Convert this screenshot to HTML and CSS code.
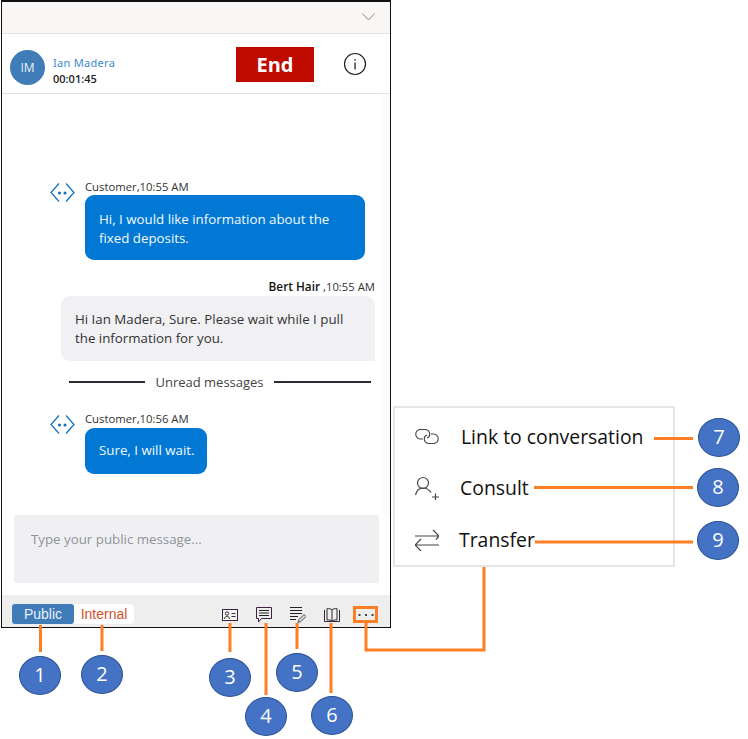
FILE: index.html
```html
<!DOCTYPE html>
<html lang="en">
<head>
<meta charset="utf-8">
<title>Conversation</title>
<link rel="stylesheet" href="styles.css">
</head>
<body>
<main class="canvas">
  <section class="panel">
    <div class="strip">
      <svg class="chev" width="13" height="8" viewBox="0 0 13 8"><path d="M.5.5 6.500 7 12.500.5" fill="none" stroke="#8a8a8a" stroke-width="1"/></svg>
    </div>
    <header class="head">
      <div class="avatar">IM</div>
      <div class="who">
        <div class="name">Ian Madera</div>
        <div class="time">00:01:45</div>
      </div>
      <button class="end">End</button>
      <svg class="info" width="24" height="24" viewBox="0 0 24 24"><circle cx="12" cy="12" r="10.5" fill="none" stroke="#222" stroke-width="1.2"/><rect x="11.4" y="10.5" width="1.3" height="7" fill="#222"/><rect x="11.4" y="7" width="1.3" height="1.6" fill="#222"/></svg>
    </header>
    <div class="messages">
      <div class="msg in first">
        <svg class="bot" width="25" height="19" viewBox="0 0 25 19"><path d="M9 .5 1 9.500l8 9M16 .5l8 9-8 9" fill="none" stroke="#0a6fc2" stroke-width="1.200"/><circle cx="9.500" cy="10" r="1.500" fill="#0a6fc2"/><circle cx="15" cy="10" r="1.500" fill="#0a6fc2"/></svg>
        <div class="stack">
          <div class="meta">Customer,10:55 AM</div>
          <div class="bubble blue wide">Hi, I would like information about the fixed deposits.</div>
        </div>
      </div>
      <div class="msg out">
        <div class="meta right"><span class="agent">Bert Hair</span> ,10:55 AM</div>
        <div class="bubble grey">Hi Ian Madera, Sure. Please wait while I pull the information for you.</div>
      </div>
      <div class="unread"><span class="rule rule-l"></span><span class="unread-text">Unread messages</span><span class="rule rule-r"></span></div>
      <div class="msg in">
        <svg class="bot" width="25" height="19" viewBox="0 0 25 19"><path d="M9 .5 1 9.500l8 9M16 .5l8 9-8 9" fill="none" stroke="#0a6fc2" stroke-width="1.200"/><circle cx="9.500" cy="10" r="1.500" fill="#0a6fc2"/><circle cx="15" cy="10" r="1.500" fill="#0a6fc2"/></svg>
        <div class="stack">
          <div class="meta">Customer,10:56 AM</div>
          <div class="bubble blue short">Sure, I will wait.</div>
        </div>
      </div>
    </div>
    <div class="composer">Type your public message...</div>
    <footer class="tools">
      <div class="tabs"><span class="tab on">Public</span><span class="tab off">Internal</span></div>
      <div class="icons">
        <svg width="16" height="16" viewBox="0 0 16 16"><rect x=".5" y="2.500" width="15" height="11" fill="#f6f4f6" stroke="#3a2340"/><circle cx="5" cy="6.500" r="1.700" fill="none" stroke="#333"/><path d="M2.500 12c0-3.500 5-3.500 5 0M9.500 6.500h4M9.500 9.500h4" fill="none" stroke="#333"/></svg>
        <svg width="16" height="16" viewBox="0 0 16 16"><path d="M.5.5h15v11H5.500L2.500 15v-3.500h-2z" fill="none" stroke="#3a2340"/><path d="M3 3.500h10M3 6h10M3 8.500h10" stroke="#222"/></svg>
        <svg width="16" height="16" viewBox="0 0 16 16"><path d="M0 .5h12M0 3.500h12M0 6.500h12M0 9.500h8M0 12.500h6" stroke="#222"/><path d="M8 15.500l1-3 5-5 2 2-5 5z" fill="#cfd6dc" stroke="#555"/></svg>
        <svg width="16" height="16" viewBox="0 0 16 16"><path d="M.5 3v11.500h15V3" fill="none" stroke="#3a2340"/><path d="M3 13V1.700c2.200-.2 4 0 5 1.300 1-1.300 2.800-1.500 5-1.300V13c-2.200-.2-4 0-5 1.300C7 13 5.200 12.800 3 13zM8 3v11" fill="none" stroke="#2d2d33"/></svg>
        <svg width="16" height="16" viewBox="0 0 16 16"><rect x=".5" y="7" width="2" height="2" fill="#444"/><rect x="7" y="7" width="2" height="2" fill="#444"/><rect x="13.500" y="7" width="2" height="2" fill="#444"/></svg>
      </div>
    </footer>
  </section>

  <section class="menu">
    <div class="item link">
      <svg class="mi" width="24" height="15" viewBox="0 0 24 15"><path d="M8 10H5.500a4.750 4.750 0 0 1 0-9.500H10a4.750 4.750 0 0 1 4.750 4.750A4 4 0 0 1 12 9" fill="none" stroke="#444" stroke-width="1.100"/><path d="M16 5h2.500a4.750 4.750 0 0 1 0 9.500H14a4.750 4.750 0 0 1-4.750-4.750A4 4 0 0 1 12 6" fill="none" stroke="#444" stroke-width="1.100"/></svg>
      <span>Link to conversation</span>
    </div>
    <div class="item consult">
      <svg class="mi" width="24" height="24" viewBox="0 0 24 24"><circle cx="8" cy="7" r="5.500" fill="none" stroke="#444" stroke-width="1.200"/><path d="M.6 19c1-5 4-7 7.400-7s6 1.500 8 4.500" fill="none" stroke="#444" stroke-width="1.200"/><path d="M20.500 17.500v7M17 21h7" stroke="#444" stroke-width="1.200"/></svg>
      <span>Consult</span>
    </div>
    <div class="item transfer">
      <svg class="mi" width="24" height="22" viewBox="0 0 24 22"><path d="M0 7h23.500M18 1l6 6-3 3.500M24 16H.5M6 10l-6 6 6 6" fill="none" stroke="#444" stroke-width="1.200"/></svg>
      <span>Transfer</span>
    </div>
  </section>

  <svg class="wires" width="748" height="739" viewBox="0 0 748 739">
    <g fill="none" stroke="#fd7e23" stroke-width="3">
      <path d="M40.500 625v27M102 625v26M230 623v29M266 623v72M297 623v26M331 623v70"/>
      <path d="M366 622v28h118V567"/>
      <path d="M654 438.500h39M534 487.500h159M535 542h158"/>
    </g>
    <rect x="354.500" y="607.500" width="22" height="14" fill="none" stroke="#fd7e23" stroke-width="3"/>
  </svg>

  <span class="pin p1">1</span>
  <span class="pin p2">2</span>
  <span class="pin p3">3</span>
  <span class="pin p4">4</span>
  <span class="pin p5">5</span>
  <span class="pin p6">6</span>
  <span class="pin p7">7</span>
  <span class="pin p8">8</span>
  <span class="pin p9">9</span>
</main>
</body>
</html>
```
FILE: styles.css
```css
* { box-sizing: border-box; }
html, body { margin: 0; padding: 0; background: #fff; }
body { font-family: "Open Sans", "Noto Sans", sans-serif; color: #222; }
.canvas { position: relative; width: 748px; height: 739px; overflow: hidden; }

.panel {
  width: 390px;
  height: 628px;
  margin-left: 1px;
  border: 1px solid #111;
  border-top-width: 2px;
  display: flex;
  flex-direction: column;
  background: #fff;
}
.strip {
  height: 32px;
  flex: none;
  background: #f8f7f5;
  border-bottom: 1px solid #e4e2e0;
  display: flex;
  justify-content: flex-end;
  align-items: center;
  padding: 0 15px 2px 0;
}
.head {
  height: 60px;
  flex: none;
  border-bottom: 1px solid #e3e3e3;
  display: flex;
  align-items: center;
  padding: 0 0 0 8px;
}
.avatar {
  width: 35px;
  height: 35px;
  margin-top: 8px;
  border-radius: 50%;
  background: #3f7cb8;
  color: #eaf2fa;
  font-size: 12px;
  display: flex;
  align-items: center;
  justify-content: center;
  flex: none;
}
.who { margin: 14px 0 0 8px; width: 183px; flex: none; line-height: 16px; }
.name { font-family: "Noto Sans", sans-serif; font-size: 11px; color: #3b8ad0; letter-spacing: .3px; }
.time { font-size: 11px; color: #222; font-weight: 600; }
.end {
  width: 78px;
  height: 35px;
  margin-top: 1px;
  border: 0;
  padding: 0;
  background: #bf0a00;
  color: #fff;
  font: 700 20px "Open Sans", sans-serif;
}
.info { margin-left: 29px; flex: none; }

.messages {
  flex: 1;
  min-height: 0;
  padding: 84px 15px 0 48px;
  background: linear-gradient(to right, #fff 381px, #fbfbfb 381px);
}
.msg.in { display: flex; align-items: flex-start; gap: 10px; }
.msg.first { margin-bottom: 18px; }
.bot { flex: none; margin: 5px 0 0 0; }
.stack { display: flex; flex-direction: column; }
.meta { font-size: 11.300px; line-height: 17px; color: #333; }
.meta.right { text-align: right; margin-bottom: 1px; }
.agent { font-size: 11.800px; font-weight: 600; color: #111; }
.bubble { font-size: 13.300px; line-height: 19px; border-radius: 9px; }
.blue { background: #0078d4; color: #f4f9fd; padding: 15px 14px 12px; }
.wide { width: 280px; }
.short { width: 122px; margin-top: 1px; padding: 13px 14px 14px; white-space: nowrap; }
.msg.out { margin: 0 0 0 11px; }
.grey { background: #f1f1f3; color: #333; padding: 14px 28px 13px 14px; border-radius: 9px 9px 0 9px; }
.unread {
  display: flex;
  align-items: center;
  margin: 10px -10px 17px 19px;
  height: 22px;
  font-size: 13px;
  color: #444;
}
.rule { height: 2px; margin-top: -1px; background: #2a2a33; }
.rule-l { width: 76px; }
.rule-r { width: 97px; }
.unread-text { width: 129px; text-align: center; }

.composer {
  flex: none;
  height: 68px;
  margin: 0 11px 12px 12px;
  padding: 14px 17px;
  background: #f0f0f2;
  border-radius: 3px;
  font-size: 13.300px;
  line-height: 20px;
  color: #8f939b;
}
.tools {
  flex: none;
  height: 32px;
  background: #eeeeee;
  display: flex;
  align-items: center;
  padding: 6px 16px 0 10px;
}
.tabs { display: flex; background: #fff; border-radius: 4px; }
.tab { height: 20px; display: flex; align-items: center; justify-content: center; font-family: "Liberation Sans", sans-serif; font-size: 14px; }
.tab.on { width: 62px; background: #3f7cb8; color: #e8f1f8; border-radius: 3px; }
.tab.off { width: 60px; color: #d2502c; }
.icons { margin: 2px 0 0 auto; display: flex; align-items: center; gap: 18px; }

.menu {
  position: absolute;
  left: 393px;
  top: 406px;
  width: 282px;
  height: 161px;
  background: #fff;
  border: 2px solid #e6e6e6;
  display: flex;
  flex-direction: column;
  padding: 3px 0 0 20px;
  font-size: 19.400px;
  color: #111;
}
.item { display: flex; align-items: center; height: 51px; }
.item.transfer { margin-top: 1px; }
.mi { flex: none; }
.link span { margin-left: 22px; }
.consult span { margin-left: 21px; }
.transfer span { margin-left: 20px; }

.wires { position: absolute; left: 0; top: 0; pointer-events: none; }
.pin {
  position: absolute;
  width: 42px;
  height: 39px;
  padding-bottom: 3px;
  border-radius: 50%;
  background: #4472c4;
  border: 1px solid #2f5597;
  color: #fff;
  font-family: "Open Sans", sans-serif;
  font-size: 20px;
  display: flex;
  align-items: center;
  justify-content: center;
}
.p1 { left: 19px; top: 656px; }
.p2 { left: 81px; top: 655px; }
.p3 { left: 209px; top: 658px; }
.p4 { left: 245px; top: 697px; }
.p5 { left: 276px; top: 653px; }
.p6 { left: 311px; top: 696px; }
.p7 { left: 698px; top: 418px; }
.p8 { left: 697px; top: 468px; }
.p9 { left: 697px; top: 521px; }
```
